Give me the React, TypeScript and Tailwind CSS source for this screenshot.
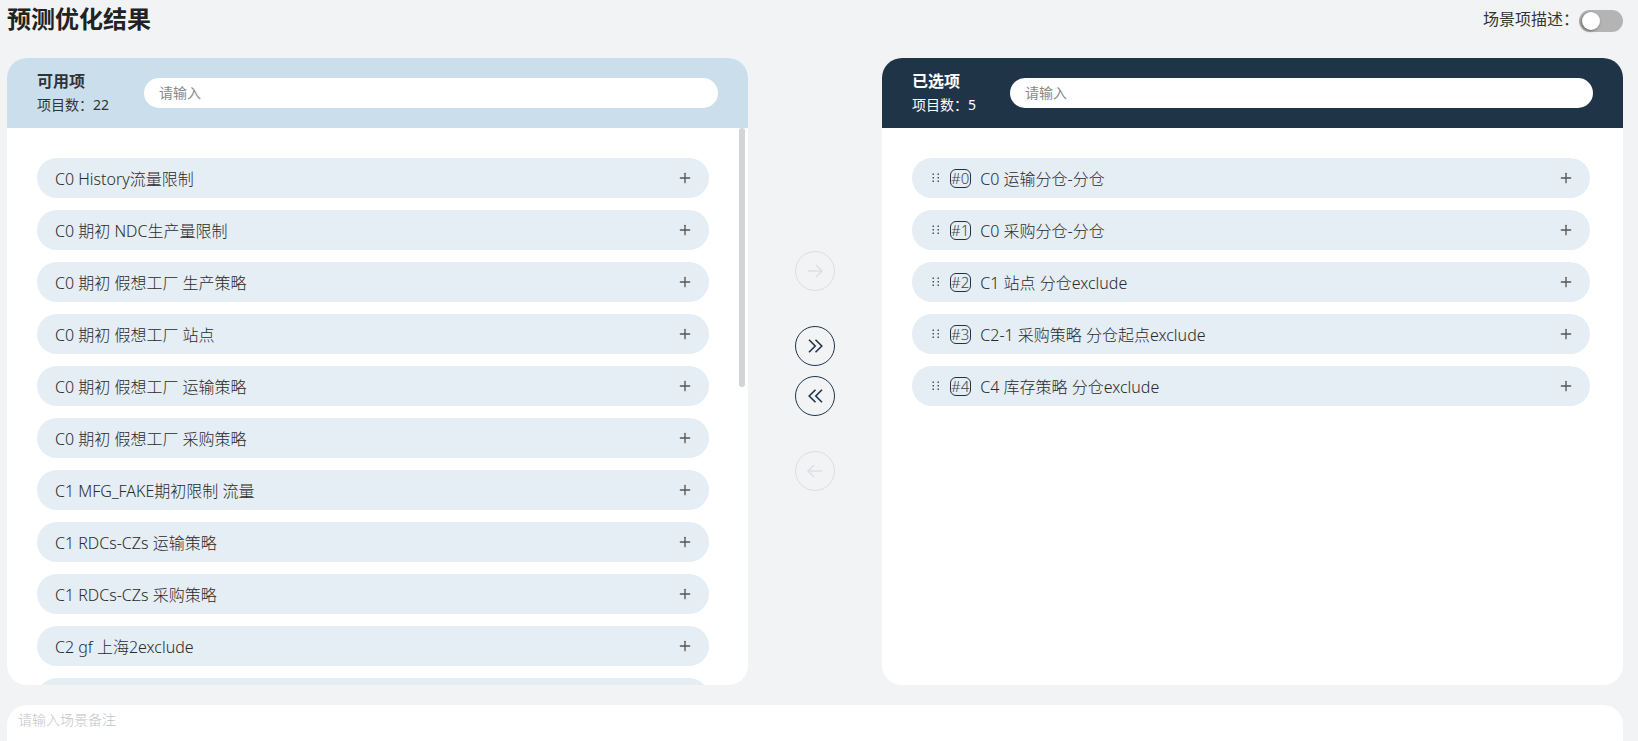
import { Plus } from "lucide-react";

const available = [
  "C0 History流量限制",
  "C0 期初 NDC生产量限制",
  "C0 期初 假想工厂 生产策略",
  "C0 期初 假想工厂 站点",
  "C0 期初 假想工厂 运输策略",
  "C0 期初 假想工厂 采购策略",
  "C1 MFG_FAKE期初限制 流量",
  "C1 RDCs-CZs 运输策略",
  "C1 RDCs-CZs 采购策略",
  "C2 gf 上海2exclude",
  "",
];

const selected = [
  "C0 运输分仓-分仓",
  "C0 采购分仓-分仓",
  "C1 站点 分仓exclude",
  "C2-1 采购策略 分仓起点exclude",
  "C4 库存策略 分仓exclude",
];

function DragDots() {
  return (
    <svg width="8" height="10" viewBox="0 0 8 10" className="shrink-0" fill="#4b5563">
      {[0.5, 4, 7.5].map((y) => (
        <g key={y}>
          <rect x="0.5" y={y} width="1.5" height="1.5" />
          <rect x="5.5" y={y} width="1.5" height="1.5" />
        </g>
      ))}
    </svg>
  );
}

function Row({ label, index }: { label: string; index?: number }) {
  return (
    <div className="flex h-10 shrink-0 items-center rounded-[20px] bg-[#e5edf5] pl-[18px] pr-4 text-base text-[#2a2a2a]">
      {index !== undefined && (
        <>
          <span className="ml-0.5">
            <DragDots />
          </span>
          <span className="ml-2.5 mr-[9px] flex h-[19px] items-center rounded-md border border-[#1f3347] pr-px text-[15px] font-light leading-none text-[#444]">
            #{index}
          </span>
        </>
      )}
      <span className="flex-1 truncate pt-0.5 font-light">{label}</span>
      <Plus size={16} strokeWidth={2} color="#555" />
    </div>
  );
}

function Panel({
  title,
  count,
  dark,
  children,
}: {
  title: string;
  count: number;
  dark?: boolean;
  children: React.ReactNode;
}) {
  return (
    <section className="flex h-full w-[741px] flex-col overflow-hidden rounded-[20px] bg-white">
      <header
        className={`flex h-[70px] shrink-0 items-center pl-[30px] pr-[30px] ${dark ? "bg-[#203448] text-white" : "bg-[#cbdeec] text-[#333]"}`}
      >
        <div className={dark ? "w-[98px] shrink-0" : "w-[107px] shrink-0"}>
          <div className="text-base font-semibold leading-6">{title}</div>
          <div className="text-sm leading-6">项目数：{count}</div>
        </div>
        <div className="flex h-[30px] flex-1 items-center rounded-[15px] bg-white px-[15px] text-sm text-[#888]">
          请输入
        </div>
      </header>
      {children}
    </section>
  );
}

function RoundButton({ children, off }: { children: React.ReactNode; off?: boolean }) {
  return (
    <button
      className={`flex size-10 items-center justify-center rounded-full border ${off ? "border-[#dcdfe3]" : "border-[#203448]"}`}
    >
      {children}
    </button>
  );
}

function ArrowIcon({ left }: { left?: boolean }) {
  return (
    <svg width="16" height="14" viewBox="0 0 16 14" fill="none" stroke="#dcdfe3" strokeWidth="1.5" className={left ? "rotate-180" : ""}>
      <path d="M1 7h14M9 1l6 6-6 6" />
    </svg>
  );
}

function DoubleChevron({ left }: { left?: boolean }) {
  return (
    <svg width="15" height="14" viewBox="0 0 15 14" fill="none" stroke="#203448" strokeWidth="1.6" className={left ? "rotate-180" : ""}>
      <path d="M1 .7 7.2 7 1 13.3M7.5 .7 13.8 7l-6.3 6.3" />
    </svg>
  );
}

export default function App() {
  return (
    <div className="flex h-[741px] w-[1638px] flex-col overflow-hidden bg-[#f1f3f5] pl-[7px] pr-[15px] font-['Noto_Sans','Noto_Sans_CJK_SC',sans-serif]">
      <div className="flex h-[58px] shrink-0 items-start justify-between">
        <h1 className="text-2xl font-bold leading-[38px] text-[#222]">预测优化结果</h1>
        <div className="flex items-center pt-[7px] text-base text-[#333]">
          <span className="pb-1">场景项描述：</span>
          <span className="relative h-[22px] w-11 rounded-full bg-[#b4b4b4]">
            <span className="absolute left-[3px] top-[2px] size-[18px] rounded-full bg-white shadow-[-1px_1px_3px_rgba(0,0,0,0.45)]" />
          </span>
        </div>
      </div>

      <div className="flex h-[627px] shrink-0 items-stretch">
        <Panel title="可用项" count={22}>
          <div className="relative min-h-0 flex-1 overflow-hidden">
            <div className="flex flex-col gap-3 pl-[30px] pr-[39px] pt-[30px]">
              {available.map((label, i) => (
                <Row key={i} label={label} />
              ))}
            </div>
            {/* Scrollbar thumb */}
            <div className="absolute right-[3px] top-0 h-[259px] w-1.5 rounded-full bg-[#d4d4d4]" />
          </div>
        </Panel>

        <div className="flex w-[134px] shrink-0 flex-col items-center pt-[193px]">
          <RoundButton off>
            <ArrowIcon />
          </RoundButton>
          <div className="mt-[35px] flex flex-col gap-[10px]">
            <RoundButton>
              <DoubleChevron />
            </RoundButton>
            <RoundButton>
              <DoubleChevron left />
            </RoundButton>
          </div>
          <div className="mt-[35px]">
            <RoundButton off>
              <ArrowIcon left />
            </RoundButton>
          </div>
        </div>

        <Panel title="已选项" count={5} dark>
          <div className="flex flex-col gap-3 pl-[30px] pr-[33px] pt-[30px]">
            {selected.map((label, i) => (
              <Row key={label} label={label} index={i} />
            ))}
          </div>
        </Panel>
      </div>

      <div className="mt-5 min-h-0 flex-1 rounded-t-[20px] bg-white px-[11px] pt-[5px] text-sm font-light leading-5 text-[#c0c4cc]">
        请输入场景备注
      </div>
    </div>
  );
}
